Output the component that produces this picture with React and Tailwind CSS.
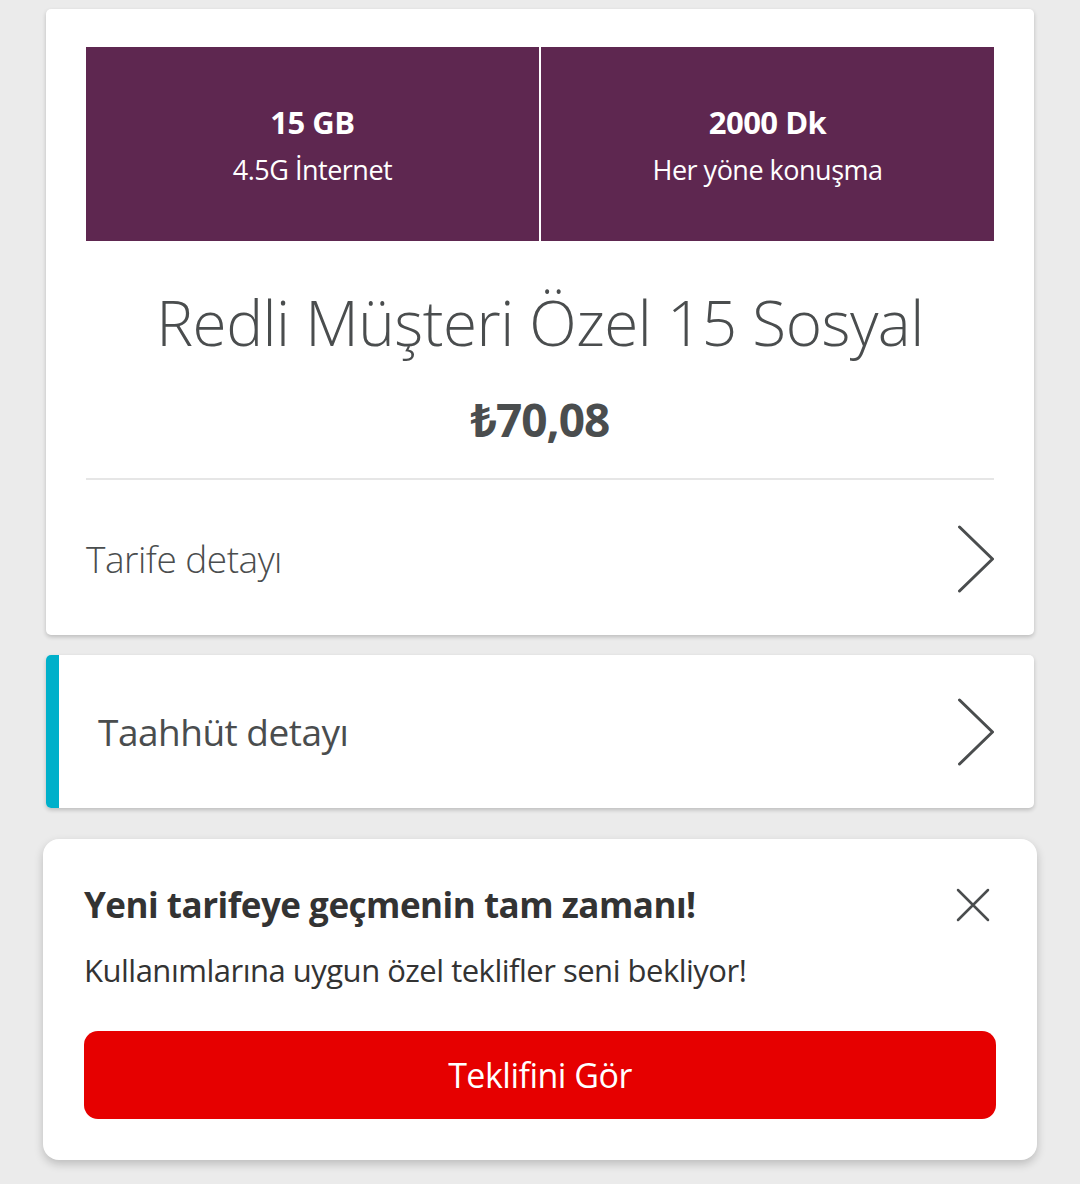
import React from 'react';

const Chevron = () => (
  <svg width="38" height="68" viewBox="0 0 38 68" fill="none" className="shrink-0">
    <path d="M3.5 2 L36.5 34 L3.5 66" stroke="#4a4d4e" strokeWidth="3" strokeLinecap="round" strokeLinejoin="round" />
  </svg>
);

const CloseIcon = () => (
  <svg width="34" height="34" viewBox="0 0 34 34" fill="none">
    <path d="M2 2 L32 32 M32 2 L2 32" stroke="#4a4d4e" strokeWidth="2.5" strokeLinecap="round" />
  </svg>
);

const App = () => {
  return (
    <div className="min-h-[1184px] w-[1080px] bg-[#ebebeb] pt-[9px] text-[#4a4d4e]" style={{ fontFamily: '"Open Sans", "Noto Sans", sans-serif' }}>
      <div className="mx-[46px] bg-white rounded-[5px] shadow-[0_2px_4px_rgba(0,0,0,0.2)] px-[40px] pt-[38px]">
        <div className="flex h-[194px] bg-[#5e2750] text-white">
          <div className="flex-1 flex flex-col items-center justify-center pt-[12px] border-r-2 border-white">
            <span className="text-[31px] font-bold leading-[40px] tracking-[-0.5px]">15 GB</span>
            <span className="text-[27px] leading-[56px] tracking-[-0.5px]">4.5G İnternet</span>
          </div>
          <div className="flex-1 flex flex-col items-center justify-center pt-[12px]">
            <span className="text-[31px] font-bold leading-[40px] tracking-[-0.5px]">2000 Dk</span>
            <span className="text-[27px] leading-[56px] tracking-[-0.5px]">Her yöne konuşma</span>
          </div>
        </div>
        <h1 className="mt-[44px] text-center text-[62px] font-light leading-[74px] tracking-[-0.5px]">Redli Müşteri Özel 15 Sosyal</h1>
        <p className="mt-[32px] text-center text-[46px] font-bold leading-[56px] tracking-[-1px]">₺70,08</p>
        <div className="mt-[31px] border-t-2 border-[#e6e6e6]" />
        <div className="flex items-center justify-between h-[155px] pt-[2px]">
          <span className="text-[37px] font-light tracking-[-0.5px]">Tarife detayı</span>
          <Chevron />
        </div>
      </div>

      <div className="mx-[46px] mt-[20px] flex h-[153px] bg-white rounded-[5px] shadow-[0_2px_4px_rgba(0,0,0,0.2)] overflow-hidden">
        <div className="w-[13px] bg-[#00b0ca]" />
        <div className="flex-1 flex items-center justify-between pl-[39px] pr-[40px]">
          <span className="text-[37px] tracking-[-0.5px]">Taahhüt detayı</span>
          <Chevron />
        </div>
      </div>

      <div className="mx-[43px] mt-[31px] bg-white rounded-[16px] shadow-[0_4px_10px_rgba(0,0,0,0.2)] px-[41px] pt-[44px] pb-[41px]">
        <div className="flex items-center justify-between">
          <h2 className="text-[35px] font-bold leading-[44px] tracking-[-0.5px] text-[#333333]">Yeni tarifeye geçmenin tam zamanı!</h2>
          <div className="mr-[6px]"><CloseIcon /></div>
        </div>
        <p className="mt-[23px] text-[31px] leading-[40px] tracking-[-0.5px] text-[#333333]">Kullanımlarına uygun özel teklifler seni bekliyor!</p>
        <button className="mt-[41px] w-full h-[88px] bg-[#e60000] rounded-[14px] text-white text-[34px] tracking-[-0.5px]">Teklifini Gör</button>
      </div>
    </div>
  );
};

export default App;
